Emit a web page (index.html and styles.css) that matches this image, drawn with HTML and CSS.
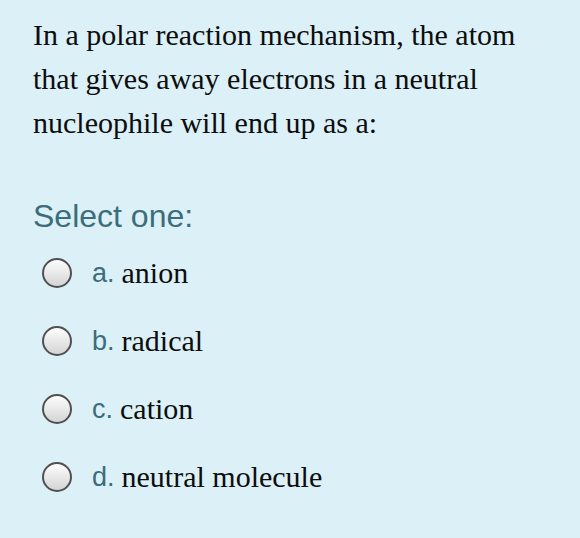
FILE: index.html
```html
<!DOCTYPE html>
<html>
<head>
<meta charset="utf-8">
<link rel="stylesheet" href="styles.css">
</head>
<body>
<div class="page">
  <p class="question">In a polar reaction mechanism, the atom that gives away electrons in a neutral nucleophile will end up as a:</p>
  <div class="prompt">Select one:</div>
  <div class="answers">
    <label class="option"><span class="radio"></span><span class="letter">a.</span><span class="text">anion</span></label>
    <label class="option"><span class="radio"></span><span class="letter">b.</span><span class="text">radical</span></label>
    <label class="option"><span class="radio"></span><span class="letter">c.</span><span class="text">cation</span></label>
    <label class="option"><span class="radio"></span><span class="letter">d.</span><span class="text">neutral molecule</span></label>
  </div>
</div>
</body>
</html>
```
FILE: styles.css
```css
html, body {
  margin: 0;
  padding: 0;
  background: #dbf0f7;
}
.page {
  width: 580px;
  height: 538px;
  box-sizing: border-box;
  padding: 13px 33px 0 33px;
  background: #dbf0f7;
}
.question {
  margin: 0;
  font-family: "Liberation Serif", "Times New Roman", serif;
  font-size: 30px;
  line-height: 44px;
  color: #0d0d0d;
  width: 500px;
}
.prompt {
  margin-top: 53px;
  font-family: "Liberation Sans", Arial, sans-serif;
  font-size: 32px;
  line-height: 36px;
  color: #3b6d7b;
}
.answers {
  display: flex;
  flex-direction: column;
  gap: 34px;
  margin-top: 22px;
  padding-left: 9px;
}
.option {
  display: flex;
  align-items: center;
  height: 34px;
}
.radio {
  width: 26px;
  height: 26px;
  border: 2px solid #505050;
  border-radius: 50%;
  background: linear-gradient(#fdfdfd, #d4d4d4);
  margin-right: 20px;
  flex: none;
}
.letter {
  font-family: "Liberation Sans", Arial, sans-serif;
  font-size: 27px;
  color: #3b6d7b;
  margin-right: 7px;
}
.text {
  font-family: "Liberation Serif", "Times New Roman", serif;
  font-size: 30px;
  color: #0d0d0d;
}
```
